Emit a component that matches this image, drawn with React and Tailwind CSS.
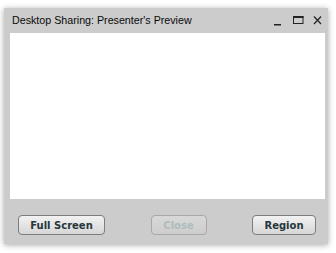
export default function App() {
  return (
    <div className="w-[336px] h-[253px] bg-white pt-[8px] pl-[4px]">
      <div className="w-[324px] h-[236px] flex flex-col bg-[#cccccc] shadow-[0_1px_6px_rgba(0,0,0,0.35)]">
        <div className="h-[25px] flex items-center pl-[8px] pr-[5px]">
          <span className="flex-1 text-[10.7px] text-[#0a0a0a] font-['Liberation_Sans',sans-serif]">
            Desktop Sharing: Presenter's Preview
          </span>
          {/* window controls */}
          <svg width="50" height="14" viewBox="0 0 50 14" className="text-[#222]">
            <rect x="1" y="10" width="7" height="1.5" fill="currentColor" />
            <rect x="20.5" y="2.5" width="9.5" height="7" fill="none" stroke="currentColor" strokeWidth="1" />
            <rect x="20" y="2" width="10.5" height="2" fill="currentColor" />
            <path d="M41 2.5 L48 10 M48 2.5 L41 10" stroke="currentColor" strokeWidth="1.2" fill="none" />
          </svg>
        </div>
        <div className="flex-1 ml-[6px] mr-[3px] bg-white" />
        <div className="h-[45px] flex items-start justify-between pt-[16px] pl-[14px] pr-[12px] font-['DejaVu_Sans',sans-serif]">
          <button className="w-[87px] h-[20px] rounded-[4px] border border-[#7d7d7d] bg-gradient-to-b from-[#f2f2f2] to-[#d6d6d6] text-[10px] font-bold text-[#26363c]">
            Full Screen
          </button>
          <button disabled className="w-[56px] h-[20px] rounded-[4px] border border-[#a8a8a8] bg-gradient-to-b from-[#d8d8d8] to-[#cdcdcd] text-[10px] font-bold text-[#aebcbc]">
            Close
          </button>
          <button className="w-[64px] h-[20px] rounded-[4px] border border-[#7d7d7d] bg-gradient-to-b from-[#f2f2f2] to-[#d6d6d6] text-[10px] font-bold text-[#26363c]">
            Region
          </button>
        </div>
      </div>
    </div>
  );
}
